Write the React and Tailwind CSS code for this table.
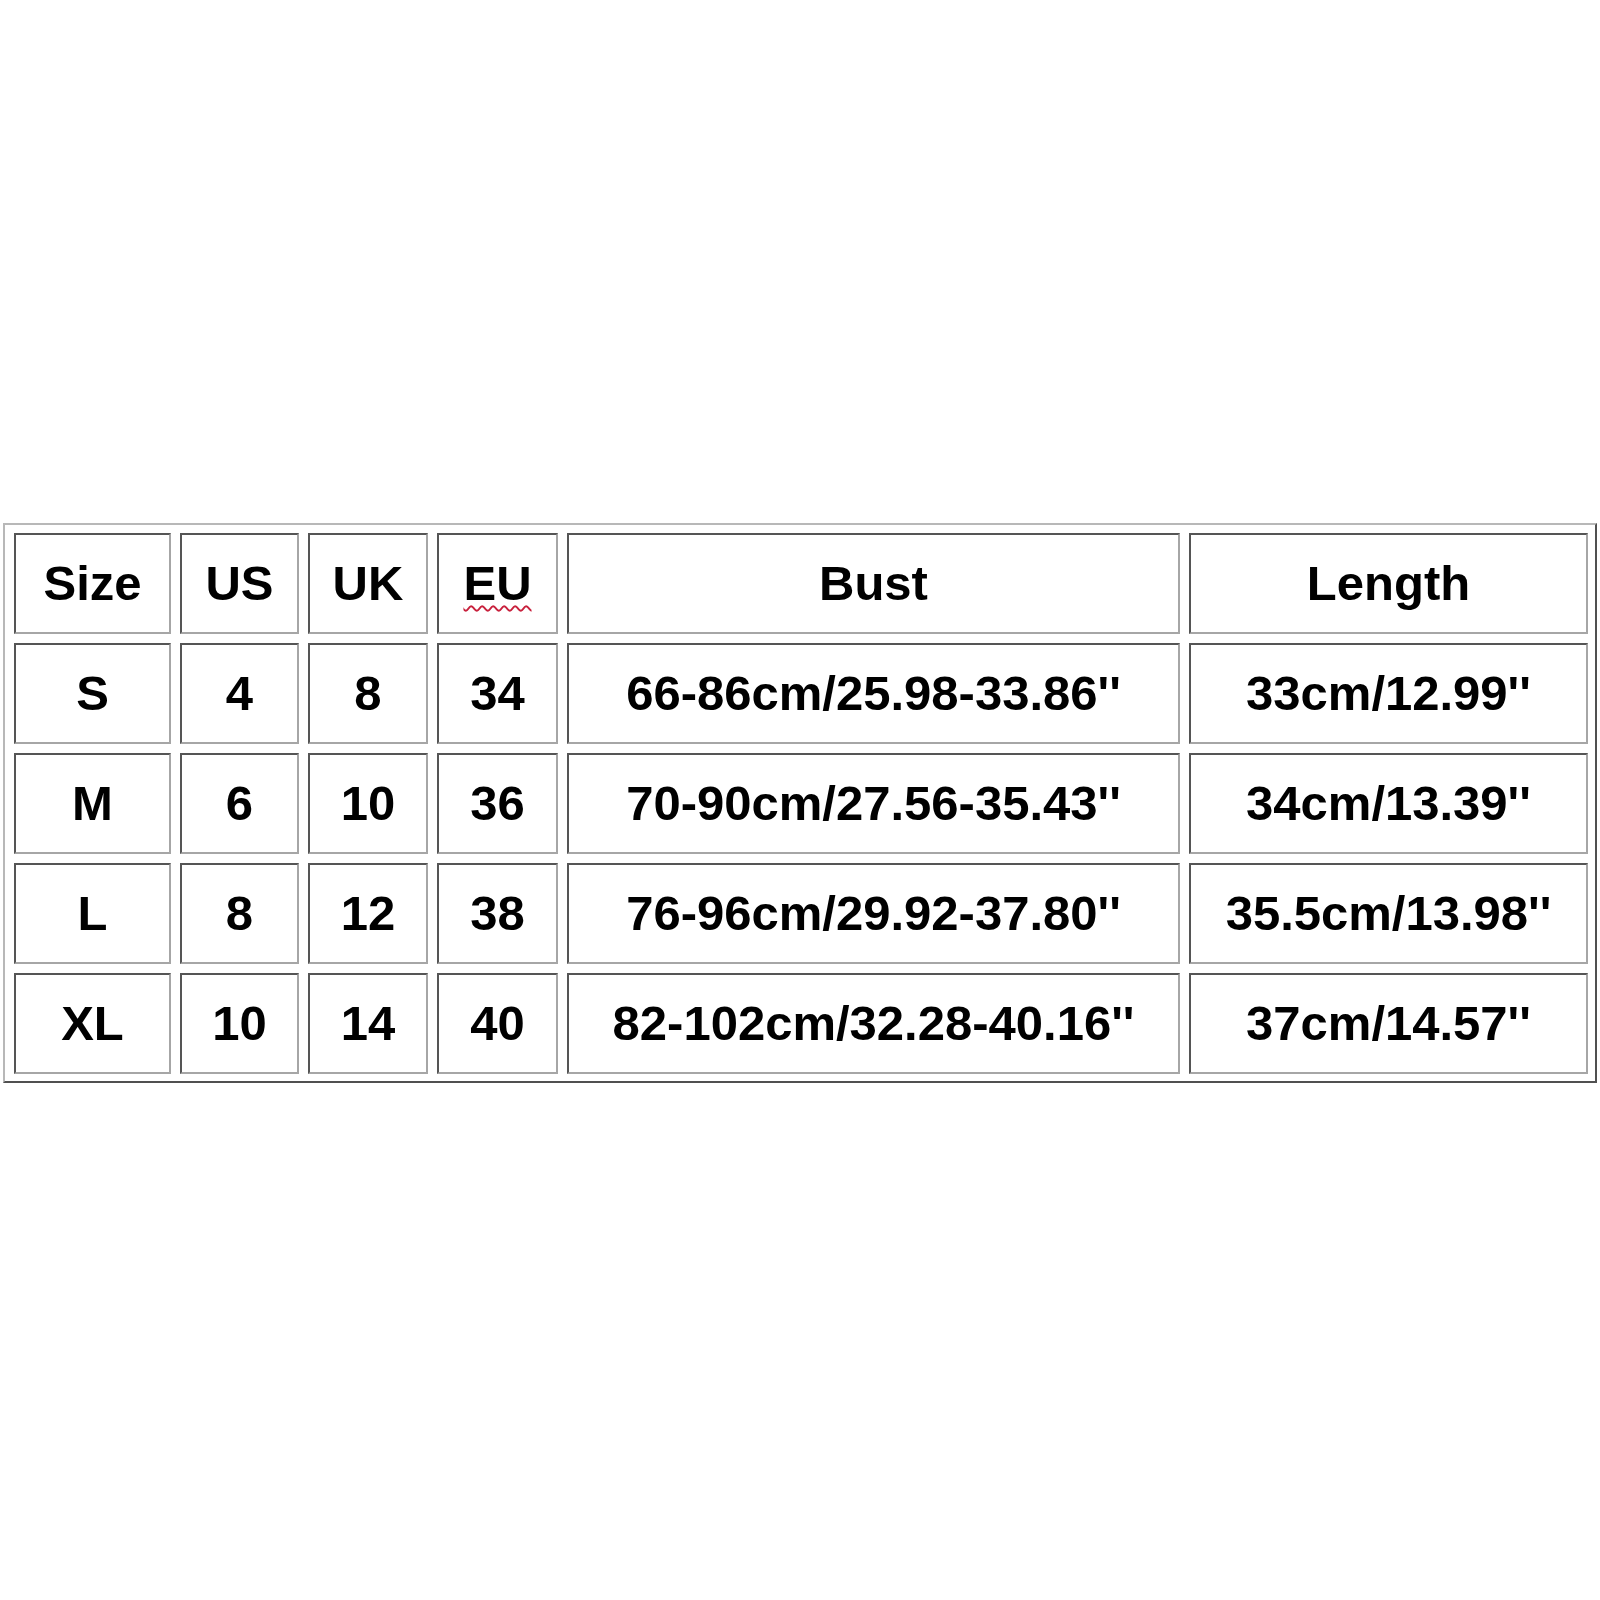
import React from 'react';

const headers = ['Size', 'US', 'UK', 'EU', 'Bust', 'Length'];

const rows = [
  ['S', '4', '8', '34', "66-86cm/25.98-33.86''", "33cm/12.99''"],
  ['M', '6', '10', '36', "70-90cm/27.56-35.43''", "34cm/13.39''"],
  ['L', '8', '12', '38', "76-96cm/29.92-37.80''", "35.5cm/13.98''"],
  ['XL', '10', '14', '40', "82-102cm/32.28-40.16''", "37cm/14.57''"],
];

function Cell({ children, spell }) {
  return (
    <div className="flex h-[101px] items-center justify-center border-2 border-t-[#555555] border-l-[#555555] border-b-[#a6a6a6] border-r-[#a6a6a6] bg-white">
      {spell ? (
        <span className="underline decoration-wavy decoration-[#c8203c] decoration-2 underline-offset-[5px]">{children}</span>
      ) : (
        children
      )}
    </div>
  );
}

export default function App() {
  return (
    <div className="h-[1600px] w-[1600px] bg-white pl-[3px] pt-[523px]">
      {/* size chart */}
      <div className="w-[1594px] border-2 border-t-[#b8b8b8] border-l-[#b8b8b8] border-b-[#505050] border-r-[#505050] bg-white pb-[7px] pl-[9px] pr-[7px] pt-[8px]">
        <div
          className="grid grid-cols-[157px_119px_120px_121px_613px_399px] gap-x-[9px] gap-y-[9px] text-[49px] font-bold leading-none text-black"
          style={{ fontFamily: '"Liberation Sans", Arial, sans-serif' }}
        >
          {headers.map((h) => (
            <Cell key={h} spell={h === 'EU'}>{h}</Cell>
          ))}
          {rows.map((r) =>
            r.map((v, i) => <Cell key={r[0] + i}>{v}</Cell>)
          )}
        </div>
      </div>
    </div>
  );
}
